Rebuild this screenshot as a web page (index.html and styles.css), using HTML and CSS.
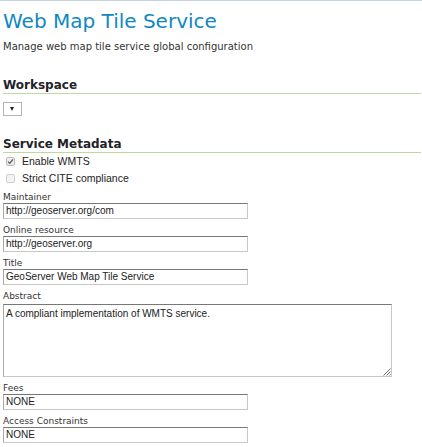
FILE: index.html
```html
<!DOCTYPE html>
<html>
<head>
<meta charset="utf-8">
<link rel="stylesheet" href="styles.css">
</head>
<body>
<div class="topline"></div>
<div class="page">
  <h1 class="title">Web Map Tile Service</h1>
  <p class="desc">Manage web map tile service global configuration</p>

  <h2 class="section ws">Workspace</h2>
  <div class="select"><span class="arrow"></span></div>

  <h2 class="section meta">Service Metadata</h2>
  <label class="check"><span class="box checked"><svg width="7" height="7" viewBox="0 0 7 7"><path d="M1 3.6 L2.8 5.4 L6 1.4" fill="none" stroke="#555" stroke-width="1.3"/></svg></span>Enable WMTS</label>
  <label class="check"><span class="box"></span>Strict CITE compliance</label>

  <div class="field first"><div class="lbl">Maintainer</div><div class="input">http://geoserver.org/com</div></div>
  <div class="field"><div class="lbl">Online resource</div><div class="input">http://geoserver.org</div></div>
  <div class="field"><div class="lbl">Title</div><div class="input">GeoServer Web Map Tile Service</div></div>
  <div class="field"><div class="lbl">Abstract</div><div class="input textarea">A compliant implementation of WMTS service.<svg class="grip" width="9" height="9" viewBox="0 0 9 9"><path d="M8.5 1.5 L1.5 8.5 M8.5 4.5 L4.5 8.5 M8.5 7.5 L7.5 8.5" stroke="#666" stroke-width="1"/></svg></div></div>
  <div class="field"><div class="lbl">Fees</div><div class="input">NONE</div></div>
  <div class="field"><div class="lbl">Access Constraints</div><div class="input">NONE</div></div>
</div>
</body>
</html>
```
FILE: styles.css
```css
html, body { margin: 0; padding: 0; background: #fff; }
body { font-family: "DejaVu Sans", Verdana, sans-serif; color: #333; }
.topline { height: 1px; background: #c6d5dd; }
.page { padding: 0 1px 0 3px; }
.title { margin: 0; padding-top: 7px; font-weight: normal; font-size: 20px; line-height: 26px; color: #0f88c3; }
.desc { margin: 6px 0 0; font-size: 10px; line-height: 14px; color: #333; }
.section { margin: 0; font-size: 12px; line-height: 16px; font-weight: bold; color: #1f2328; border-bottom: 1px solid #bfd99a; }
.ws { margin-top: 23px; }
.select { position: relative; box-sizing: border-box; margin-top: 8px; width: 19px; height: 14px; border: 1px solid #b3b3b3; background: #fff; }
.arrow { position: absolute; left: 6px; top: 4px; width: 0; height: 0; border-left: 2.5px solid transparent; border-right: 2.5px solid transparent; border-top: 4px solid #222; }
.meta { margin-top: 20px; }
.check { display: flex; align-items: center; height: 17px; font-family: "Liberation Sans", Arial, sans-serif; font-size: 10.5px; line-height: 17px; color: #222; padding-left: 3px; }
.box { box-sizing: border-box; width: 9px; height: 9px; border: 1px solid #cfcfcf; border-radius: 2px; background: #f3f3f3; margin-right: 7px; display: flex; align-items: center; justify-content: center; }
.box.checked { border-color: #bcbcbc; background: #ededed; }
.lbl { font-size: 9px; line-height: 12px; padding-top: 5px; color: #333; }
.first .lbl { padding-top: 4px; }
.input { box-sizing: border-box; width: 245px; height: 16px; border: 1px solid #c8c8c8; border-top-color: #777; border-left-color: #a8a8a8; font-family: "Liberation Sans", Arial, sans-serif; font-size: 10px; line-height: 14px; padding: 0 2px; color: #222; white-space: nowrap; }
.textarea { position: relative; width: 389px; height: 73px; margin-top: 2px; padding-top: 1px; line-height: 15px; }
.grip { position: absolute; right: 0; bottom: 0; }
```
